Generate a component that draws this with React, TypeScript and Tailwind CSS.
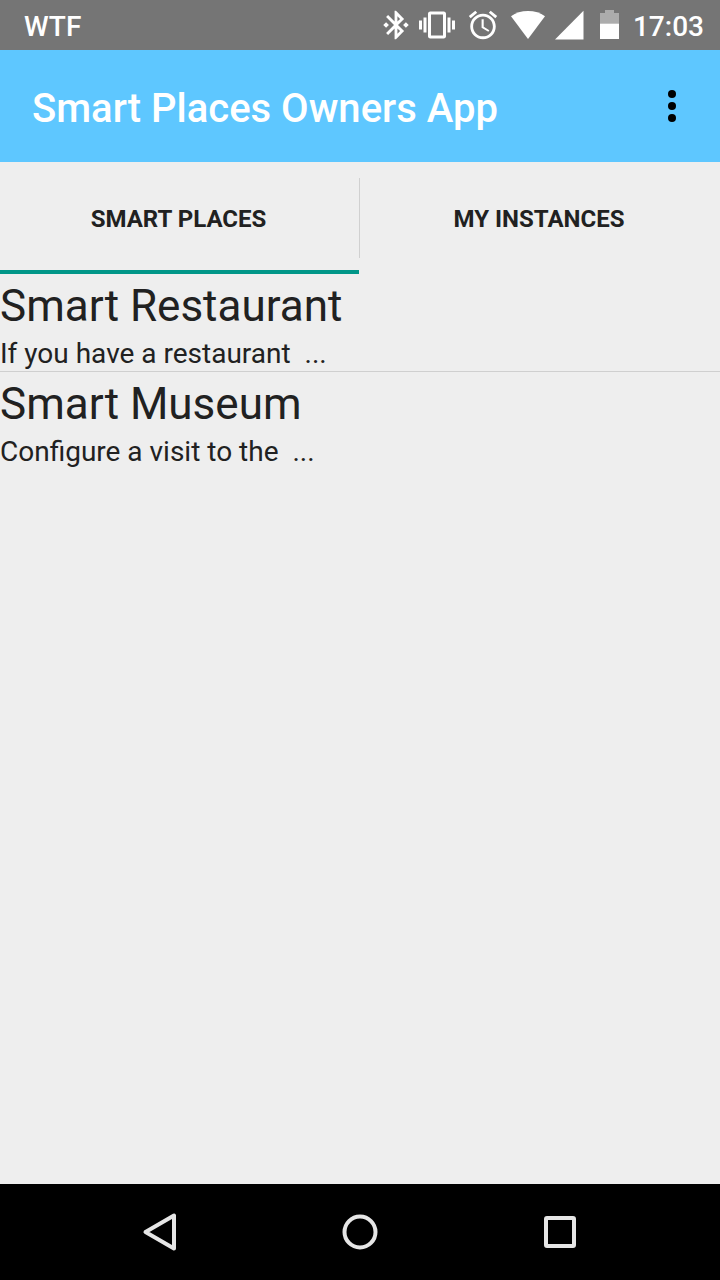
import { useState } from "react";

const places = [
  { name: "Smart Restaurant", summary: "If you have a restaurant  ..." },
  { name: "Smart Museum", summary: "Configure a visit to the  ..." },
];

const tabs = ["Smart Places", "My Instances"];

function StatusBar() {
  return (
    <div className="flex h-[50px] shrink-0 items-center bg-[#757575] pr-4 pl-6 text-[28px] leading-8 font-medium text-white">
      <span className="pt-1">WTF</span>
      <div className="ml-auto flex items-center">
        <svg className="size-[34px]" viewBox="0 0 24 24" fill="currentColor" aria-hidden="true">
          <path d="M7 12l-2-2-2 2 2 2 2-2zm10.71-4.29L12 2h-1v7.59L6.41 5 5 6.41 10.59 12 5 17.59 6.41 19 11 14.41V22h1l5.71-5.71-4.3-4.29 4.3-4.29zM13 5.83l1.88 1.88L13 9.59V5.83zm1.88 10.46L13 18.17v-3.76l1.88 1.88zM19 10l-2 2 2 2 2-2-2-2z" />
        </svg>
        <svg className="ml-1.5 size-9" viewBox="0 0 24 24" fill="currentColor" aria-hidden="true">
          <path d="M0 15h2V9H0v6zm3 2h2V7H3v10zm19-8v6h2V9h-2zm-3 8h2V7h-2v10zM16.5 3h-9C6.67 3 6 3.67 6 4.5v15c0 .83.67 1.5 1.5 1.5h9c.83 0 1.5-.67 1.5-1.5v-15c0-.83-.67-1.5-1.5-1.5zM16 19H8V5h8v14z" />
        </svg>
        <svg className="ml-[11px] size-[34px]" viewBox="0 0 24 24" fill="currentColor" aria-hidden="true">
          <path d="M22 5.72l-4.6-3.86-1.29 1.53 4.6 3.86L22 5.72zM7.88 3.39L6.6 1.86 2 5.71l1.29 1.53 4.59-3.85zM12.5 8H11v6l4.75 2.85.75-1.23-4-2.37V8zM12 4c-4.97 0-9 4.03-9 9s4.02 9 9 9c4.97 0 9-4.03 9-9s-4.03-9-9-9zm0 16c-3.87 0-7-3.13-7-7s3.13-7 7-7 7 3.13 7 7-3.13 7-7 7z" />
        </svg>
        <svg className="ml-[11px] h-[30px] w-[34px]" viewBox="0 0 34 30" fill="currentColor" aria-hidden="true">
          <path d="M17 29L0 6.3C4.500 2.900 10.500 1 17 1s12.500 1.900 17 5.300z" />
        </svg>
        <svg className="ml-2.5 h-[30px] w-[29px]" viewBox="0 0 29 30" fill="currentColor" aria-hidden="true">
          <path d="M28.500 0.800V29.500H0z" />
        </svg>
        <svg className="ml-4 h-[30px] w-[19px]" viewBox="0 0 19 30" aria-hidden="true">
          <path fill="#acacac" d="M5 0h9v3h5v11H0V3h5z" />
          <path fill="#fff" d="M0 13.700h19V29H0z" />
        </svg>
        <time className="ml-3.5 pt-1">17:03</time>
      </div>
    </div>
  );
}

function AppBar() {
  return (
    <header className="flex h-28 shrink-0 items-center justify-between bg-[#5ec7ff] pl-8">
      <h1 className="pt-1.5 text-[40px] leading-[48px] font-medium text-white">Smart Places Owners App</h1>
      <button type="button" aria-label="More options" className="flex h-28 w-24 items-center justify-center">
        <svg className="h-8 w-2" viewBox="0 0 8 32" aria-hidden="true">
          <circle cx="4" cy="4" r="4" />
          <circle cx="4" cy="16" r="4" />
          <circle cx="4" cy="28" r="4" />
        </svg>
      </button>
    </header>
  );
}

function NavigationBar() {
  return (
    <nav className="grid h-24 shrink-0 grid-cols-3 bg-black px-[60px] text-[#e6e6e6]">
      <button type="button" aria-label="Back" className="flex items-center justify-center">
        <svg className="size-10" viewBox="0 0 40 40" fill="none" stroke="currentColor" strokeWidth="4" strokeLinejoin="round" aria-hidden="true">
          <path d="M5.500 20L34 3.500V36.500z" />
        </svg>
      </button>
      <button type="button" aria-label="Home" className="flex items-center justify-center">
        <svg className="size-10" viewBox="0 0 40 40" fill="none" stroke="currentColor" strokeWidth="4" aria-hidden="true">
          <circle cx="20" cy="20" r="15.500" />
        </svg>
      </button>
      <button type="button" aria-label="Recent apps" className="flex items-center justify-center">
        <svg className="size-10" viewBox="0 0 40 40" fill="none" stroke="currentColor" strokeWidth="4" aria-hidden="true">
          <rect x="6" y="6" width="28" height="28" rx="1" />
        </svg>
      </button>
    </nav>
  );
}

export default function App() {
  const [active, setActive] = useState(0);

  return (
    <div className="flex min-h-screen flex-col bg-[#eeeeee] font-['Roboto',sans-serif] text-[#212121]">
      <StatusBar />
      <AppBar />
      <div role="tablist" className="flex h-28 shrink-0 items-stretch">
        {tabs.map((tab, index) => (
          <div key={tab} className="flex flex-1">
            <button
              type="button"
              role="tab"
              aria-selected={active === index}
              onClick={() => setActive(index)}
              className={
                active === index
                  ? "flex-1 border-y-4 border-t-transparent border-b-[#009688] pt-0.5 pr-0.5 text-2xl font-bold uppercase"
                  : "flex-1 border-y-4 border-transparent pt-0.5 pr-0.5 text-2xl font-bold uppercase"
              }
            >
              {tab}
            </button>
            {index < tabs.length - 1 && <div className="my-4 w-px shrink-0 bg-[#d0d0d0]" />}
          </div>
        ))}
      </div>
      <main className="flex-1">
        <ul className="divide-y divide-[#cfcfcf]">
          {places.map((place) => (
            <li key={place.name}>
              <h2 className="text-[44px] leading-[64px]">{place.name}</h2>
              <p className="pb-0.5 text-[28px] leading-[31px] whitespace-pre">{place.summary}</p>
            </li>
          ))}
        </ul>
      </main>
      <NavigationBar />
    </div>
  );
}
